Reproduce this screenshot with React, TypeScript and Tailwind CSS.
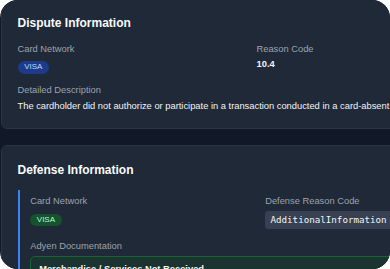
import React from "react";

function Label({ children }: { children: React.ReactNode }) {
  return (
    <div className="text-[9.33px] leading-[13.33px] text-[#9ca3af]">{children}</div>
  );
}

export default function App() {
  return (
    <div className="w-[390px] h-[269px] bg-white">
      <div className="w-[390px] h-[269px] overflow-hidden rounded-[18px] bg-[#111827] font-['Liberation_Sans',Arial,sans-serif]">
        <div className="flex flex-col gap-[16px] pl-[1px] mt-[-3px] w-[620px]">
          {/* Dispute Information */}
          <section className="rounded-[6px] border border-[#2a3444] bg-[#1f2937] px-[15.5px] pt-[15.5px] pb-[14px]">
            <h2 className="text-[12px] leading-[18.67px] font-bold text-[#f9fafb] mb-[10.5px]">
              Dispute Information
            </h2>
            <div className="grid grid-cols-[223px_1fr] gap-x-[16px] gap-y-[10.67px]">
              <div>
                <Label>Card Network</Label>
                <div className="mt-[5px] flex">
                  <span className="rounded-full bg-[#1e3a8a] px-[6.67px] py-[1px] text-[8px] leading-[10.5px] font-medium text-[#bfdbfe]">
                    VISA
                  </span>
                </div>
              </div>
              <div>
                <Label>Reason Code</Label>
                <div className="mt-[1.5px] text-[9.33px] leading-[13.33px] font-semibold text-[#f3f4f6]">
                  10.4
                </div>
              </div>
              <div className="col-span-2">
                <Label>Detailed Description</Label>
                <p className="mt-[2.7px] whitespace-nowrap text-[9.33px] leading-[13.33px] text-[#f3f4f6]">
                  The cardholder did not authorize or participate in a transaction conducted in a card-absent environment.
                </p>
              </div>
            </div>
          </section>

          {/* Defense Information */}
          <section className="rounded-[6px] border border-[#2a3444] bg-[#1f2937] px-[15.5px] pt-[15px] pb-[15px]">
            <h2 className="text-[12px] leading-[18.67px] font-bold text-[#f9fafb] mb-[10.5px]">
              Defense Information
            </h2>
            <div className="border-l-[2.67px] border-[#3b82f6] pl-[10.67px] pt-[5.3px] pb-[5.3px]">
              <div className="grid grid-cols-[219px_1fr] gap-x-[16px] gap-y-[10.67px]">
                <div>
                  <Label>Card Network</Label>
                  <div className="mt-[5.7px] flex">
                    <span className="rounded-full bg-[#14532d] px-[6.67px] py-[1px] text-[8px] leading-[10px] font-medium text-[#bbf7d0]">
                      VISA
                    </span>
                  </div>
                </div>
                <div>
                  <Label>Defense Reason Code</Label>
                  <div className="mt-[2.4px] flex">
                    <span className="rounded-[3px] bg-[#374151] px-[5.33px] py-[2.5px] font-['DejaVu_Sans_Mono','Liberation_Mono',monospace] text-[9.2px] leading-[13.33px] text-[#f3f4f6]">
                      AdditionalInformation
                    </span>
                  </div>
                </div>
                <div className="col-span-2">
                  <Label>Adyen Documentation</Label>
                  <div className="mt-[2.6px] rounded-[5px] border border-[#166534] bg-[#1b3431] px-[8px] py-[6px]">
                    <div className="text-[9.33px] leading-[13.33px] font-semibold text-[#f3f4f6]">
                      Merchandise / Services Not Received
                    </div>
                    <div className="mt-[2px] text-[9.33px] leading-[13.33px] text-[#d1d5db]">
                      Provide documentation supporting the transaction.
                    </div>
                  </div>
                </div>
              </div>
            </div>
          </section>
        </div>
      </div>
    </div>
  );
}
